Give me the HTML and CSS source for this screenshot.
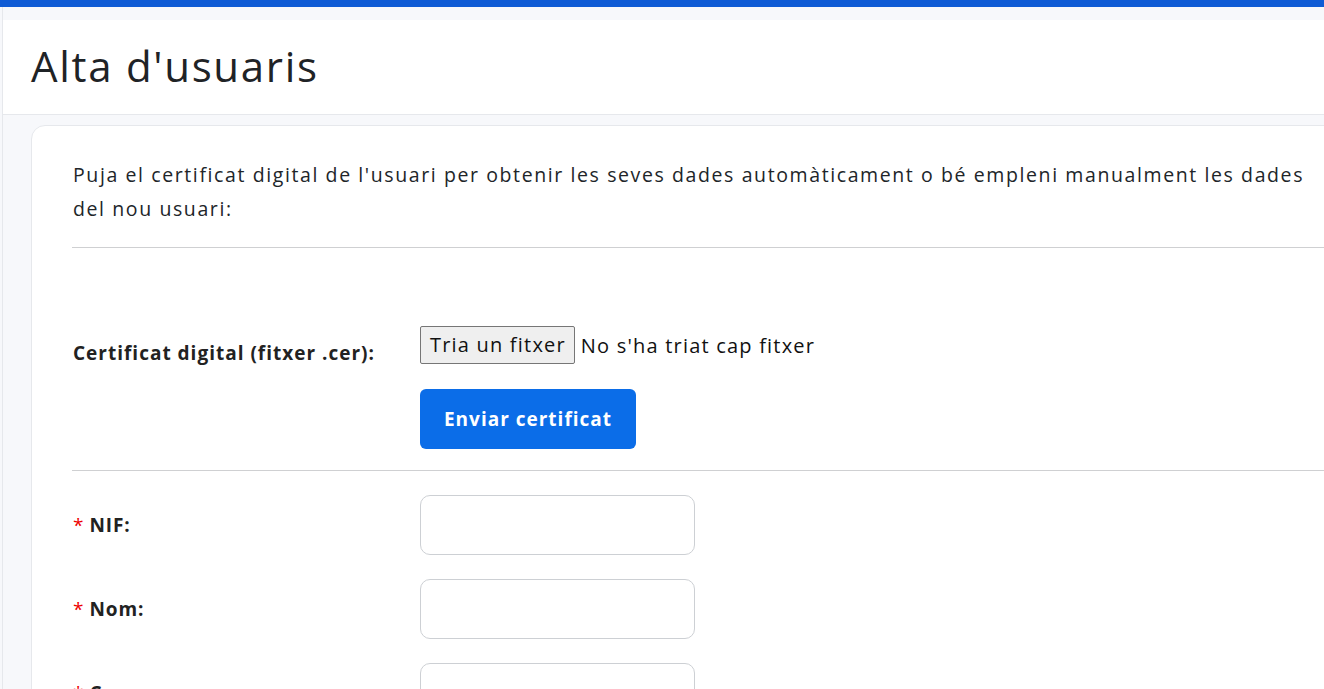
FILE: index.html
```html
<!DOCTYPE html>
<html lang="ca">
<head>
<meta charset="utf-8">
<title>Alta d'usuaris</title>
<link rel="stylesheet" href="styles.css">
</head>
<body>
<div class="topbar"></div>
<main class="main">
  <header class="page-header">
    <h1 class="page-title">Alta d'usuaris</h1>
  </header>
  <section class="content">
    <div class="card">
      <p class="intro">Puja el certificat digital de l'usuari per obtenir les seves dades automàticament o bé empleni manualment les dades del nou usuari:</p>
      <hr class="sep">
      <div class="cert-row">
        <label class="cert-label">Certificat digital (fitxer .cer):</label>
        <div class="cert-controls">
          <div class="file-input">
            <span class="file-btn">Tria un fitxer</span>
            <span class="file-name">No s'ha triat cap fitxer</span>
          </div>
          <button class="btn-primary" type="button">Enviar certificat</button>
        </div>
      </div>
      <hr class="sep sep-tight">
      <div class="fields">
        <div class="field-row">
          <label class="field-label"><span class="req">*</span>NIF:</label>
          <input class="text-input" type="text">
        </div>
        <div class="field-row">
          <label class="field-label"><span class="req">*</span>Nom:</label>
          <input class="text-input" type="text">
        </div>
        <div class="field-row">
          <label class="field-label"><span class="req">*</span>Cognoms:</label>
          <input class="text-input" type="text">
        </div>
      </div>
    </div>
  </section>
</main>
</body>
</html>
```

FILE: styles.css
```css
* { box-sizing: border-box; }
html, body { margin: 0; padding: 0; }
body {
  background: #f7f8fb;
  font-family: "Open Sans", "Noto Sans", sans-serif;
  color: #212529;
  overflow: hidden;
  width: 1324px;
  height: 689px;
}
.topbar {
  height: 7px;
  background: #0f5bd5;
}
.main {
  margin-left: 2px;
  border-left: 1px solid #e6e8ec;
  padding-top: 13px;
  min-height: 682px;
}
.page-header {
  background: #fff;
  border-bottom: 1px solid #e6e8ec;
  height: 95px;
  display: flex;
  align-items: center;
  padding-left: 28px;
}
.page-title {
  margin: 0;
  font-size: 42px;
  font-weight: 500;
  color: #1f2326;
  letter-spacing: 1.7px;
  padding-bottom: 4px;
}
.content {
  padding: 10px 0 0 28px;
}
.card {
  background: #fff;
  border: 1px solid #e6e8ec;
  border-radius: 14px;
  width: 1340px;
  padding: 32px 0 40px 41px;
}
.intro {
  margin: 0;
  font-size: 19.5px;
  line-height: 34px;
  width: 1252px;
  color: #212529;
  letter-spacing: 1.6px;
}
.sep {
  border: 0;
  border-top: 1px solid #cfd0d2;
  margin: 21px 0 0 -1px;
  width: 1300px;
}
.cert-row {
  display: flex;
  padding-top: 78px;
}
.cert-label {
  width: 347px;
  flex: none;
  font-weight: 700;
  font-size: 19px;
  letter-spacing: 1px;
  padding-top: 14px;
  color: #222;
}
.cert-controls {
  display: flex;
  flex-direction: column;
  align-items: flex-start;
  gap: 25px;
}
.file-input {
  display: flex;
  align-items: center;
  font-family: "Open Sans", sans-serif;
  font-size: 20px;
  letter-spacing: 1.2px;
}
.file-btn {
  display: inline-block;
  height: 38px;
  line-height: 36px;
  padding: 0 8px 0 9px;
  background: #efefef;
  border: 1px solid #767676;
  border-radius: 2px;
  color: #111;
}
.file-name {
  margin-left: 6px;
  color: #111;
}
.btn-primary {
  background: #0b6de8;
  color: #fff;
  border: 0;
  border-radius: 6px;
  height: 60px;
  width: 216px;
  font-family: "Open Sans", sans-serif;
  font-weight: 700;
  font-size: 19px;
  letter-spacing: 1px;
}
.sep-tight { margin-top: 21px; }
.fields {
  display: flex;
  flex-direction: column;
  gap: 24px;
  padding-top: 24px;
}
.field-row {
  display: flex;
  align-items: center;
}
.field-label {
  width: 347px;
  flex: none;
  font-weight: 700;
  font-size: 19px;
  letter-spacing: 0.9px;
  color: #222;
}
.req {
  color: #ee0000;
  font-weight: 400;
  margin-right: 6px;
  letter-spacing: 0;
}
.text-input {
  width: 275px;
  height: 60px;
  border: 1px solid #cdd0d4;
  border-radius: 10px;
  background: #fff;
}
```
